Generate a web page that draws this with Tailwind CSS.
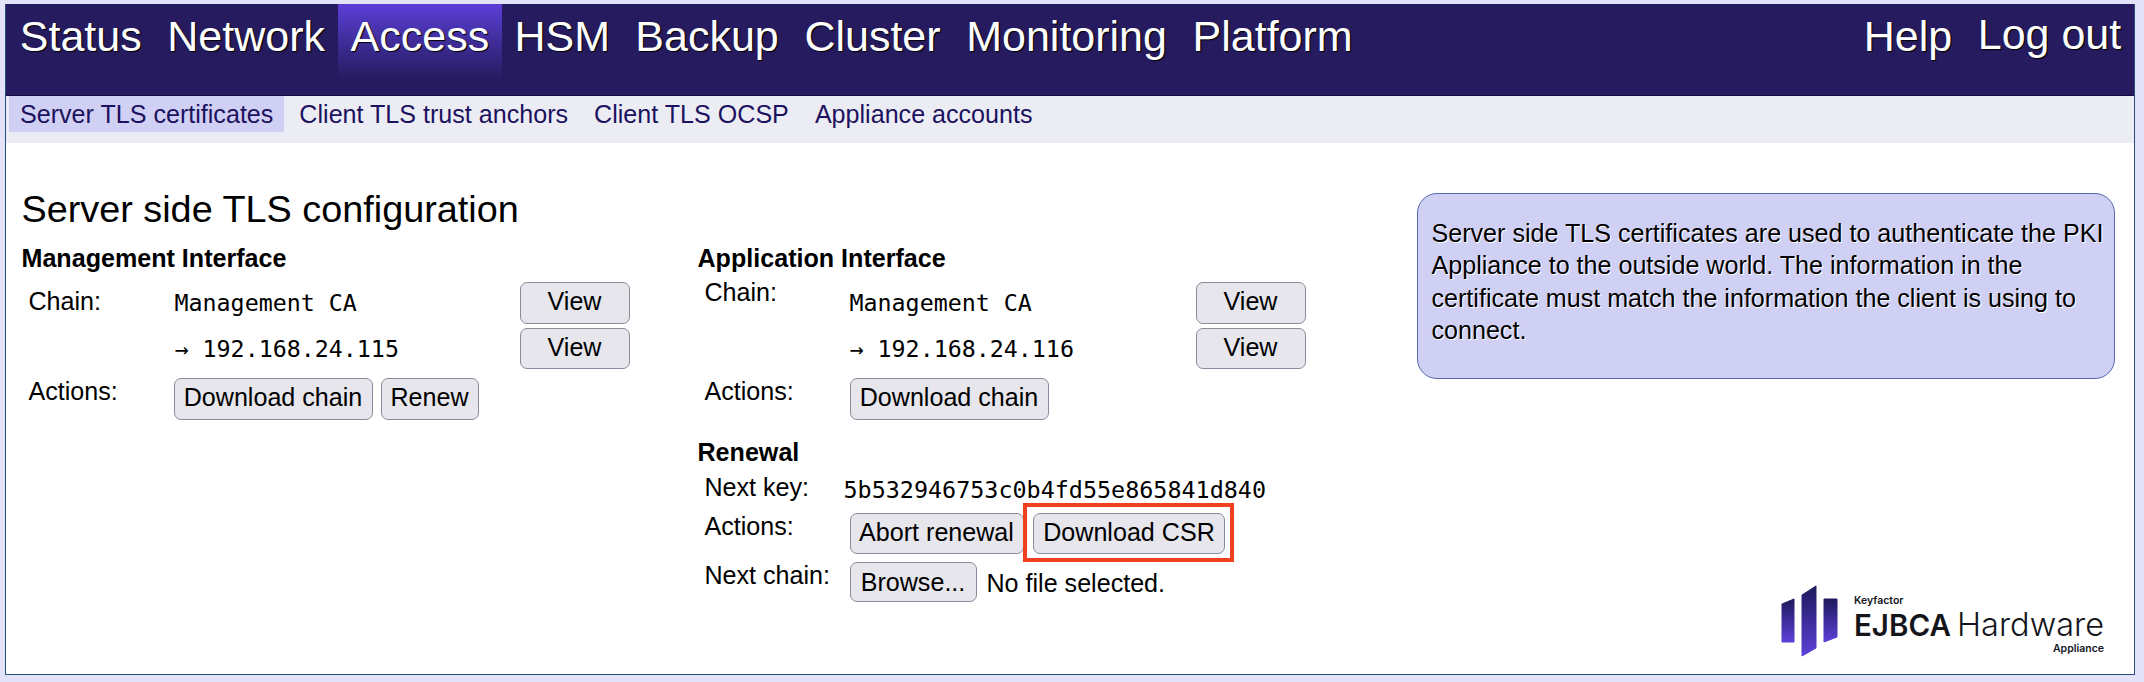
<!DOCTYPE html>
<html lang="en">
<head>
    <meta charset="UTF-8" />
    <title>Server side TLS configuration</title>
    <script src="https://cdn.jsdelivr.net/npm/@tailwindcss/browser@4"></script>
</head>
<body class="bg-[#e2e2f8] h-[682px] overflow-hidden pt-[4px] pl-[5px] font-['Liberation_Sans',sans-serif] text-[25.1px] text-black">
<div class="relative w-[2130px] h-[671px] bg-white border-x-[1.5px] border-b-[1.5px] border-[#2b4a80]">

    <!-- Main menu -->
    <div class="h-[91.5px] bg-[#261b5e] border-b border-[#150d40] flex justify-between text-[43px] leading-[64px] text-white pl-[1px] [text-shadow:1px_1px_1px_#000]">
        <nav class="flex">
            <a class="px-[12.8px]">Status</a>
            <a class="px-[12.8px]">Network</a>
            <a class="px-[12.8px] h-[76px] bg-linear-to-b from-[#5b3fd8] to-[#261b5e]">Access</a>
            <a class="px-[12.5px]">HSM</a>
            <a class="px-[12.8px]">Backup</a>
            <a class="px-[12.8px]">Cluster</a>
            <a class="px-[12.8px]">Monitoring</a>
            <a class="px-[12.8px]">Platform</a>
        </nav>
        <nav class="flex">
            <a class="px-[12.8px]">Help</a>
            <a class="px-[12.8px] -mt-[2px]">Log out</a>
        </nav>
    </div>

    <!-- Sub menu -->
    <div class="h-[47.5px] bg-[#ecedf4] pl-[3px] flex gap-[4px] text-[#1c1260] leading-[37px]">
        <a class="px-[11px] h-[36px] bg-[#d0d0f4]">Server TLS certificates</a>
        <a class="px-[11px]">Client TLS trust anchors</a>
        <a class="px-[11px]">Client TLS OCSP</a>
        <a class="px-[11px]">Appliance accounts</a>
    </div>

    <div class="flex pl-[15.5px]">
        <!-- Left part with both interfaces -->
        <div class="w-[1395px] shrink-0">
            <h1 class="mt-[46px] text-[37.8px] leading-[40px]">Server side TLS configuration</h1>
            <div class="flex mt-[16px]">
                <div class="w-[676px] shrink-0">
                    <h2 class="font-bold leading-[26px]">Management Interface</h2>
                    <div class="mt-[11px] flex h-[42px]">
                        <div class="w-[153px] pl-[7px] pt-[5px] leading-[28px]">Chain:</div>
                        <div class="w-[345px] pt-[6px] font-['DejaVu_Sans_Mono',monospace] text-[23.3px] leading-[30px]">Management CA</div>
                        <button class="w-[110px] h-[42px] pb-[2px] bg-[#e6e6ec] border-[1.5px] border-[#8a8a9c] rounded-[7px]">View</button>
                    </div>
                    <div class="mt-[4px] flex h-[41px]">
                        <div class="w-[153px]"></div>
                        <div class="w-[345px] pt-[6px] font-['DejaVu_Sans_Mono',monospace] text-[23.3px] leading-[30px]">→ 192.168.24.115</div>
                        <button class="w-[110px] h-[41px] pb-[2px] bg-[#e6e6ec] border-[1.5px] border-[#8a8a9c] rounded-[7px]">View</button>
                    </div>
                    <div class="mt-[9px] flex h-[42px]">
                        <div class="w-[152px] pl-[7px] leading-[26px]">Actions:</div>
                        <div class="flex gap-[8px]">
                            <button class="w-[199px] h-[42px] pb-[2px] bg-[#e6e6ec] border-[1.5px] border-[#8a8a9c] rounded-[7px]">Download chain</button>
                            <button class="w-[98px] h-[42px] pb-[2px] bg-[#e6e6ec] border-[1.5px] border-[#8a8a9c] rounded-[7px]">Renew</button>
                        </div>
                    </div>
                </div>

                <div class="w-[700px] shrink-0">
                    <h2 class="font-bold leading-[26px]">Application Interface</h2>
                    <div class="mt-[11px] flex h-[42px]">
                        <div class="w-[152px] pl-[7px] leading-[20px]">Chain:</div>
                        <div class="w-[346px] pt-[6px] font-['DejaVu_Sans_Mono',monospace] text-[23.3px] leading-[30px]">Management CA</div>
                        <button class="w-[110px] h-[42px] pb-[2px] bg-[#e6e6ec] border-[1.5px] border-[#8a8a9c] rounded-[7px]">View</button>
                    </div>
                    <div class="mt-[4px] flex h-[41px]">
                        <div class="w-[152px]"></div>
                        <div class="w-[346px] pt-[6px] font-['DejaVu_Sans_Mono',monospace] text-[23.3px] leading-[30px]">→ 192.168.24.116</div>
                        <button class="w-[110px] h-[41px] pb-[2px] bg-[#e6e6ec] border-[1.5px] border-[#8a8a9c] rounded-[7px]">View</button>
                    </div>
                    <div class="mt-[9px] flex h-[42px]">
                        <div class="w-[152px] pl-[7px] leading-[26px]">Actions:</div>
                        <button class="w-[199px] h-[42px] pb-[2px] bg-[#e6e6ec] border-[1.5px] border-[#8a8a9c] rounded-[7px]">Download chain</button>
                    </div>

                    <h2 class="mt-[19px] font-bold leading-[26px]">Renewal</h2>
                    <div class="mt-[4px] flex h-[40px]">
                        <div class="w-[146px] pl-[7px] pt-[5px] leading-[26px]">Next key:</div>
                        <div class="pt-[7px] font-['DejaVu_Sans_Mono',monospace] text-[23.4px] leading-[28px]">5b532946753c0b4fd55e865841d840</div>
                    </div>
                    <div class="mt-[4px] flex h-[41px]">
                        <div class="w-[152px] pl-[7px] leading-[26px]">Actions:</div>
                        <button class="w-[174px] h-[41px] pb-[3px] bg-[#e6e6ec] border-[1.5px] border-[#8a8a9c] rounded-[7px]">Abort renewal</button>
                        <div class="relative ml-[9.5px]">
                            <button class="block w-[192px] h-[41px] pb-[3px] bg-[#e6e6ec] border-[1.5px] border-[#8a8a9c] rounded-[7px]">Download CSR</button>
                            <div class="absolute -left-[10px] -right-[8.5px] -top-[10px] -bottom-[8px] border-4 border-[#f04020]"></div>
                        </div>
                    </div>
                    <div class="mt-[8px] flex h-[40px]">
                        <div class="w-[152px] pl-[7px] leading-[26px]">Next chain:</div>
                        <button class="w-[127px] h-[40px] pt-[1px] bg-[#e6e6ec] border-[1.5px] border-[#8a8a9c] rounded-[7px]">Browse...</button>
                        <span class="ml-[10px] leading-[42px]">No file selected.</span>
                    </div>
                </div>
            </div>
        </div>

        <!-- Help box -->
        <div class="mt-[50px] w-[698px] h-[186px] shrink-0 bg-[#d0d0f4] border-[1.5px] border-[#5468ac] rounded-[20px] pl-[14px] pt-[23px] leading-[32.4px] [text-shadow:1px_1px_0_#fff]">
            Server side TLS certificates are used to authenticate the PKI Appliance to the outside world. The information in the certificate must match the information the client is using to connect.
        </div>
    </div>

    <!-- Logo -->
    <div class="absolute right-[30px] bottom-[17px] flex items-start gap-[16px]">
        <svg width="57" height="72" viewBox="0 0 57 72">
            <defs>
                <linearGradient id="bars" x1="0" y1="0" x2="0" y2="1">
                    <stop offset="0" stop-color="#1e1a5c" />
                    <stop offset="1" stop-color="#5c40d8" />
                </linearGradient>
            </defs>
            <path d="M1 19 13 14V57H1Z" fill="url(#bars)" stroke="url(#bars)" stroke-linejoin="round" />
            <path d="M21 10 35 1V63L21 71Z" fill="url(#bars)" stroke="url(#bars)" stroke-linejoin="round" />
            <path d="M43 14H56V52L43 57Z" fill="url(#bars)" stroke="url(#bars)" stroke-linejoin="round" />
        </svg>
        <div class="w-[250px] font-['Inter',sans-serif] text-[#15151c] pt-[9px]">
            <div class="text-[10.5px] font-semibold leading-[14px]">Keyfactor</div>
            <div class="flex justify-between leading-[34px] whitespace-nowrap">
                <span class="text-[29.5px] font-semibold">EJBCA</span>
                <span class="text-[32.5px] font-light">Hardware</span>
            </div>
            <div class="text-[10.5px] font-semibold leading-[14px] text-right">Appliance</div>
        </div>
    </div>
</div>
</body>
</html>
